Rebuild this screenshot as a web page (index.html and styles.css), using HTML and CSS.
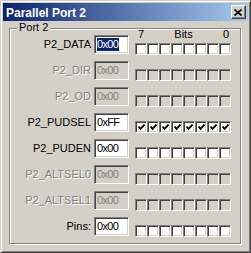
FILE: index.html
```html
<!DOCTYPE html>
<html lang="en">
<head>
  <meta charset="UTF-8" />
  <title>Parallel Port 2</title>
  <link rel="stylesheet" href="styles.css">
</head>
<body>

  <div class="window">
    <!-- Title bar -->
    <div class="titlebar">
      <span class="title">Parallel Port 2</span>
      <div class="close">
        <svg width="8" height="7" viewBox="0 0 8 7"><path d="M0.5 0.5 L7.5 6.5 M7.5 0.5 L0.5 6.5" stroke="#000" stroke-width="1.7" fill="none"/></svg>
      </div>
    </div>

    <!-- Port 2 group -->
    <div class="groupbox">
      <span class="legend">Port 2</span>
      <div class="rows">

        <div class="row">
          <div class="label">P2_DATA</div>
          <div class="value"><span class="sel">0x00</span></div>
          <div class="bits head">
            <div class="bits-head"><span>7</span><span>Bits</span><span>0</span></div>
            <div class="boxes">
              <span class="box"></span><span class="box"></span><span class="box"></span><span class="box"></span>
              <span class="box"></span><span class="box"></span><span class="box"></span><span class="box"></span>
            </div>
          </div>
        </div>

        <div class="row off">
          <div class="label">P2_DIR</div>
          <div class="value">0x00</div>
          <div class="bits">
            <div class="boxes">
              <span class="box"></span><span class="box"></span><span class="box"></span><span class="box"></span>
              <span class="box"></span><span class="box"></span><span class="box"></span><span class="box"></span>
            </div>
          </div>
        </div>

        <div class="row off">
          <div class="label">P2_OD</div>
          <div class="value">0x00</div>
          <div class="bits">
            <div class="boxes">
              <span class="box"></span><span class="box"></span><span class="box"></span><span class="box"></span>
              <span class="box"></span><span class="box"></span><span class="box"></span><span class="box"></span>
            </div>
          </div>
        </div>

        <div class="row">
          <div class="label">P2_PUDSEL</div>
          <div class="value">0xFF</div>
          <div class="bits">
            <div class="boxes">
              <span class="box"><svg class="tick" width="7" height="7" viewBox="0 0 7 7"><path d="M0.5 2.5 L2.5 4.8 L6.5 0.6" stroke="#000" stroke-width="1.8" fill="none"/></svg></span>
              <span class="box"><svg class="tick" width="7" height="7" viewBox="0 0 7 7"><path d="M0.5 2.5 L2.5 4.8 L6.5 0.6" stroke="#000" stroke-width="1.8" fill="none"/></svg></span>
              <span class="box"><svg class="tick" width="7" height="7" viewBox="0 0 7 7"><path d="M0.5 2.5 L2.5 4.8 L6.5 0.6" stroke="#000" stroke-width="1.8" fill="none"/></svg></span>
              <span class="box"><svg class="tick" width="7" height="7" viewBox="0 0 7 7"><path d="M0.5 2.5 L2.5 4.8 L6.5 0.6" stroke="#000" stroke-width="1.8" fill="none"/></svg></span>
              <span class="box"><svg class="tick" width="7" height="7" viewBox="0 0 7 7"><path d="M0.5 2.5 L2.5 4.8 L6.5 0.6" stroke="#000" stroke-width="1.8" fill="none"/></svg></span>
              <span class="box"><svg class="tick" width="7" height="7" viewBox="0 0 7 7"><path d="M0.5 2.5 L2.5 4.8 L6.5 0.6" stroke="#000" stroke-width="1.8" fill="none"/></svg></span>
              <span class="box"><svg class="tick" width="7" height="7" viewBox="0 0 7 7"><path d="M0.5 2.5 L2.5 4.8 L6.5 0.6" stroke="#000" stroke-width="1.8" fill="none"/></svg></span>
              <span class="box"><svg class="tick" width="7" height="7" viewBox="0 0 7 7"><path d="M0.5 2.5 L2.5 4.8 L6.5 0.6" stroke="#000" stroke-width="1.8" fill="none"/></svg></span>
            </div>
          </div>
        </div>

        <div class="row">
          <div class="label">P2_PUDEN</div>
          <div class="value">0x00</div>
          <div class="bits">
            <div class="boxes">
              <span class="box"></span><span class="box"></span><span class="box"></span><span class="box"></span>
              <span class="box"></span><span class="box"></span><span class="box"></span><span class="box"></span>
            </div>
          </div>
        </div>

        <div class="row off">
          <div class="label">P2_ALTSEL0</div>
          <div class="value">0x00</div>
          <div class="bits">
            <div class="boxes">
              <span class="box"></span><span class="box"></span><span class="box"></span><span class="box"></span>
              <span class="box"></span><span class="box"></span><span class="box"></span><span class="box"></span>
            </div>
          </div>
        </div>

        <div class="row off">
          <div class="label">P2_ALTSEL1</div>
          <div class="value">0x00</div>
          <div class="bits">
            <div class="boxes">
              <span class="box"></span><span class="box"></span><span class="box"></span><span class="box"></span>
              <span class="box"></span><span class="box"></span><span class="box"></span><span class="box"></span>
            </div>
          </div>
        </div>

        <div class="row">
          <div class="label">Pins:</div>
          <div class="value">0x00</div>
          <div class="bits">
            <div class="boxes">
              <span class="box"></span><span class="box"></span><span class="box"></span><span class="box"></span>
              <span class="box"></span><span class="box"></span><span class="box"></span><span class="box"></span>
            </div>
          </div>
        </div>

      </div>
    </div>
  </div>

</body>
</html>
```

FILE: styles.css
```css
* {
  box-sizing: border-box;
}

body {
  margin: 0;
  font-family: "Liberation Sans", Arial, sans-serif;
  font-size: 11px;
  color: #000;
  background: #D4D0C8;
}

.window {
  width: 251px;
  height: 253px;
  padding: 2px;
  background: #D4D0C8;
  border: 1px solid;
  border-color: #D4D0C8 #404040 #404040 #D4D0C8;
  box-shadow: inset 1px 1px 0 #fff, inset -1px -1px 0 #808080;
  display: flex;
  flex-direction: column;
}

.titlebar {
  height: 18px;
  padding-left: 3px;
  background: linear-gradient(to right, #0A246A, #A6CAF0);
  display: flex;
  align-items: center;
  justify-content: space-between;
}

.title {
  color: #fff;
  font-weight: bold;
  font-size: 12px;
  line-height: 18px;
  padding-top: 1px;
}

.close {
  width: 15px;
  height: 14px;
  margin-right: 2px;
  background: #D4D0C8;
  border: 1px solid;
  border-color: #fff #404040 #404040 #fff;
  box-shadow: inset -1px -1px 0 #808080;
  display: flex;
  align-items: center;
  justify-content: center;
  padding-right: 1px;
}

.close svg {
  display: block;
}

.groupbox {
  flex: 1;
  position: relative;
  margin: 7px 7px 6px 6px;
  border: 1px solid #808080;
  box-shadow: inset 1px 1px 0 #fff, 1px 1px 0 #fff;
}

.legend {
  position: absolute;
  top: -8px;
  left: 7px;
  padding: 0 2px;
  line-height: 13px;
  background: #D4D0C8;
}

.rows {
  padding-top: 6px;
  display: flex;
  flex-direction: column;
  gap: 6px;
}

.row {
  display: flex;
  align-items: flex-start;
  height: 20px;
}

.label {
  width: 81px;
  margin-right: 3px;
  text-align: right;
  line-height: 19px;
}

.value {
  width: 35px;
  height: 19px;
  padding: 2px 0 0 2px;
  line-height: 13px;
  letter-spacing: -0.7px;
  background: #fff;
  border: 1px solid;
  border-color: #808080 #fff #fff #808080;
  box-shadow: inset 1px 1px 0 #404040, inset -1px -1px 0 #D4D0C8;
  white-space: nowrap;
}

.sel {
  display: inline-block;
  background: #0A246A;
  color: #fff;
  padding-right: 1px;
}

.bits {
  width: 96px;
  margin-left: 6px;
  padding-top: 8px;
}

.bits.head {
  padding-top: 0;
}

.bits-head {
  margin-top: -7px;
  margin-bottom: 2px;
  height: 13px;
  line-height: 13px;
  padding: 0 2px 0 3px;
  display: flex;
  justify-content: space-between;
}

.boxes {
  display: flex;
}

.box {
  width: 12px;
  height: 12px;
  background: #fff;
  border: 1px solid;
  border-color: #808080 #fff #fff #808080;
  box-shadow: inset 1px 1px 0 #404040, inset -1px -1px 0 #D4D0C8;
  display: flex;
  align-items: center;
  justify-content: center;
  padding: 1px 0 0 1px;
}

.tick {
  display: block;
}

.row.off .label {
  color: #808080;
  text-shadow: 1px 1px 0 #fff;
}

.row.off .value {
  background: #D4D0C8;
  color: #808080;
}

.row.off .box {
  background: #D4D0C8;
}
```
